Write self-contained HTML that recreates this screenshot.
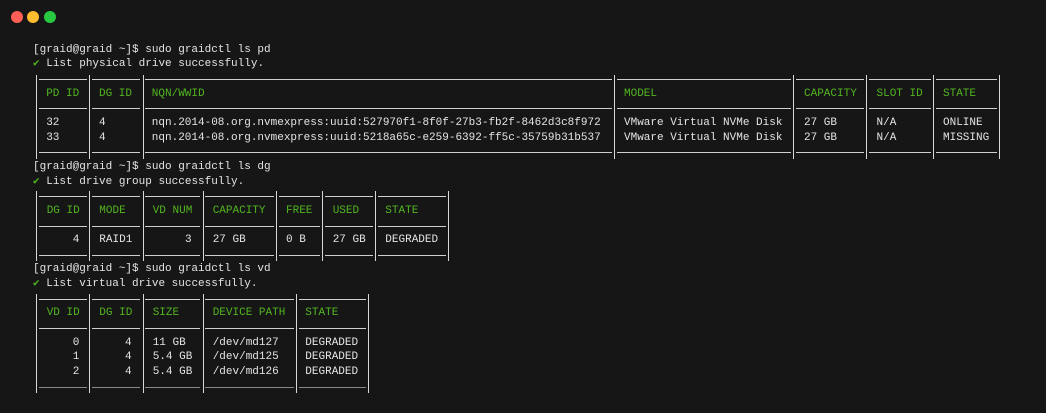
<!DOCTYPE html>
<html><head><meta charset="utf-8"><style>
html,body{margin:0;padding:0;background:#161616;}
#w{position:relative;width:1046px;height:413px;background:#161616;overflow:hidden;font-family:"Liberation Mono","DejaVu Sans Mono",monospace;font-size:11px;color:#e4e4e4;}
.d{position:absolute;top:11px;width:12px;height:12px;border-radius:50%;}
.t{position:absolute;white-space:pre;line-height:14.64px;}
.g{color:#52b520;}
.v{position:absolute;width:1px;background:#d8d8d8;}
.h{position:absolute;height:1px;background:#d0d0d0;}
</style></head><body><div id="w">
<div class="d" style="left:11px;background:#ff5f57"></div>
<div class="d" style="left:27px;background:#febc2e"></div>
<div class="d" style="left:44px;background:#28c840"></div>

<div class="t" style="left:33px;top:42.7px">[graid@graid ~]$ sudo graidctl ls pd</div>
<div class="t" style="left:33px;top:57.3px"><span class="g">✔</span> List physical drive successfully.</div>
<div class="t g" style="left:46.2px;top:86.6px">PD ID</div>
<div class="t g" style="left:99px;top:86.6px">DG ID</div>
<div class="t g" style="left:151.8px;top:86.6px">NQN/WWID</div>
<div class="t g" style="left:624px;top:86.6px">MODEL</div>
<div class="t g" style="left:804px;top:86.6px">CAPACITY</div>
<div class="t g" style="left:876.5px;top:86.6px">SLOT ID</div>
<div class="t g" style="left:943px;top:86.6px">STATE</div>
<div class="t" style="left:46.2px;top:115.9px">32</div>
<div class="t" style="left:99px;top:115.9px">4</div>
<div class="t" style="left:151.8px;top:115.9px">nqn.2014-08.org.nvmexpress:uuid:527970f1-8f0f-27b3-fb2f-8462d3c8f972</div>
<div class="t" style="left:624px;top:115.9px">VMware Virtual NVMe Disk</div>
<div class="t" style="left:804px;top:115.9px">27 GB</div>
<div class="t" style="left:876.5px;top:115.9px">N/A</div>
<div class="t" style="left:943px;top:115.9px">ONLINE</div>
<div class="t" style="left:46.2px;top:130.5px">33</div>
<div class="t" style="left:99px;top:130.5px">4</div>
<div class="t" style="left:151.8px;top:130.5px">nqn.2014-08.org.nvmexpress:uuid:5218a65c-e259-6392-ff5c-35759b31b537</div>
<div class="t" style="left:624px;top:130.5px">VMware Virtual NVMe Disk</div>
<div class="t" style="left:804px;top:130.5px">27 GB</div>
<div class="t" style="left:876.5px;top:130.5px">N/A</div>
<div class="t" style="left:943px;top:130.5px">MISSING</div>

<div class="v" style="left:36px;top:75px;height:84px"></div>
<div class="v" style="left:89px;top:75px;height:84px"></div>
<div class="v" style="left:142.5px;top:75px;height:84px"></div>
<div class="v" style="left:614px;top:75px;height:84px"></div>
<div class="v" style="left:793px;top:75px;height:84px"></div>
<div class="v" style="left:866px;top:75px;height:84px"></div>
<div class="v" style="left:933px;top:75px;height:84px"></div>
<div class="v" style="left:999px;top:75px;height:84px"></div>
<div class="h" style="left:39px;width:48px;top:79px"></div><div class="h" style="left:92px;width:48px;top:79px"></div><div class="h" style="left:145px;width:467px;top:79px"></div><div class="h" style="left:617px;width:174px;top:79px"></div><div class="h" style="left:796px;width:68px;top:79px"></div><div class="h" style="left:869px;width:62px;top:79px"></div><div class="h" style="left:936px;width:61px;top:79px"></div>
<div class="h" style="left:39px;width:48px;top:108px"></div><div class="h" style="left:92px;width:48px;top:108px"></div><div class="h" style="left:145px;width:467px;top:108px"></div><div class="h" style="left:617px;width:174px;top:108px"></div><div class="h" style="left:796px;width:68px;top:108px"></div><div class="h" style="left:869px;width:62px;top:108px"></div><div class="h" style="left:936px;width:61px;top:108px"></div>
<div class="h" style="left:39px;width:48px;top:152px"></div><div class="h" style="left:92px;width:48px;top:152px"></div><div class="h" style="left:145px;width:467px;top:152px"></div><div class="h" style="left:617px;width:174px;top:152px"></div><div class="h" style="left:796px;width:68px;top:152px"></div><div class="h" style="left:869px;width:62px;top:152px"></div><div class="h" style="left:936px;width:61px;top:152px"></div>

<div class="t" style="left:33px;top:159.8px">[graid@graid ~]$ sudo graidctl ls dg</div>
<div class="t" style="left:33px;top:174.5px"><span class="g">✔</span> List drive group successfully.</div>
<div class="t g" style="left:46.7px;top:203.7px">DG ID</div>
<div class="t g" style="left:99.3px;top:203.7px">MODE</div>
<div class="t g" style="left:152.7px;top:203.7px">VD NUM</div>
<div class="t g" style="left:212.7px;top:203.7px">CAPACITY</div>
<div class="t g" style="left:286px;top:203.7px">FREE</div>
<div class="t g" style="left:332.7px;top:203.7px">USED</div>
<div class="t g" style="left:385.3px;top:203.7px">STATE</div>
<div class="t" style="left:72.7px;top:233px">4</div>
<div class="t" style="left:99.3px;top:233px">RAID1</div>
<div class="t" style="left:185px;top:233px">3</div>
<div class="t" style="left:212.7px;top:233px">27 GB</div>
<div class="t" style="left:286px;top:233px">0 B</div>
<div class="t" style="left:332.7px;top:233px">27 GB</div>
<div class="t" style="left:385.3px;top:233px">DEGRADED</div>

<div class="v" style="left:36px;top:191px;height:70px"></div>
<div class="v" style="left:89px;top:191px;height:70px"></div>
<div class="v" style="left:142.5px;top:191px;height:70px"></div>
<div class="v" style="left:202.5px;top:191px;height:70px"></div>
<div class="v" style="left:276px;top:191px;height:70px"></div>
<div class="v" style="left:322px;top:191px;height:70px"></div>
<div class="v" style="left:375px;top:191px;height:70px"></div>
<div class="v" style="left:448px;top:191px;height:70px"></div>
<div class="h" style="left:39px;width:48px;top:196px"></div><div class="h" style="left:92px;width:48px;top:196px"></div><div class="h" style="left:145px;width:55px;top:196px"></div><div class="h" style="left:205px;width:69px;top:196px"></div><div class="h" style="left:279px;width:41px;top:196px"></div><div class="h" style="left:325px;width:48px;top:196px"></div><div class="h" style="left:378px;width:68px;top:196px"></div>
<div class="h" style="left:39px;width:48px;top:226px"></div><div class="h" style="left:92px;width:48px;top:226px"></div><div class="h" style="left:145px;width:55px;top:226px"></div><div class="h" style="left:205px;width:69px;top:226px"></div><div class="h" style="left:279px;width:41px;top:226px"></div><div class="h" style="left:325px;width:48px;top:226px"></div><div class="h" style="left:378px;width:68px;top:226px"></div>
<div class="h" style="left:39px;width:48px;top:255px"></div><div class="h" style="left:92px;width:48px;top:255px"></div><div class="h" style="left:145px;width:55px;top:255px"></div><div class="h" style="left:205px;width:69px;top:255px"></div><div class="h" style="left:279px;width:41px;top:255px"></div><div class="h" style="left:325px;width:48px;top:255px"></div><div class="h" style="left:378px;width:68px;top:255px"></div>

<div class="t" style="left:33px;top:262.3px">[graid@graid ~]$ sudo graidctl ls vd</div>
<div class="t" style="left:33px;top:276.9px"><span class="g">✔</span> List virtual drive successfully.</div>
<div class="t g" style="left:46.7px;top:306.2px">VD ID</div>
<div class="t g" style="left:99.3px;top:306.2px">DG ID</div>
<div class="t g" style="left:152.7px;top:306.2px">SIZE</div>
<div class="t g" style="left:212.7px;top:306.2px">DEVICE PATH</div>
<div class="t g" style="left:305.3px;top:306.2px">STATE</div>
<div class="t" style="left:72.7px;top:335.5px">0</div><div class="t" style="left:125px;top:335.5px">4</div><div class="t" style="left:152.7px;top:335.5px">11 GB</div><div class="t" style="left:212.7px;top:335.5px">/dev/md127</div><div class="t" style="left:305.3px;top:335.5px">DEGRADED</div>
<div class="t" style="left:72.7px;top:350.2px">1</div><div class="t" style="left:125px;top:350.2px">4</div><div class="t" style="left:152.7px;top:350.2px">5.4 GB</div><div class="t" style="left:212.7px;top:350.2px">/dev/md125</div><div class="t" style="left:305.3px;top:350.2px">DEGRADED</div>
<div class="t" style="left:72.7px;top:364.8px">2</div><div class="t" style="left:125px;top:364.8px">4</div><div class="t" style="left:152.7px;top:364.8px">5.4 GB</div><div class="t" style="left:212.7px;top:364.8px">/dev/md126</div><div class="t" style="left:305.3px;top:364.8px">DEGRADED</div>

<div class="v" style="left:36px;top:294px;height:99px"></div>
<div class="v" style="left:89px;top:294px;height:99px"></div>
<div class="v" style="left:142.5px;top:294px;height:99px"></div>
<div class="v" style="left:202.5px;top:294px;height:99px"></div>
<div class="v" style="left:296px;top:294px;height:99px"></div>
<div class="v" style="left:368px;top:294px;height:99px"></div>
<div class="h" style="left:39px;width:48px;top:299px"></div><div class="h" style="left:92px;width:48px;top:299px"></div><div class="h" style="left:145px;width:55px;top:299px"></div><div class="h" style="left:205px;width:89px;top:299px"></div><div class="h" style="left:299px;width:67px;top:299px"></div>
<div class="h" style="left:39px;width:48px;top:328px"></div><div class="h" style="left:92px;width:48px;top:328px"></div><div class="h" style="left:145px;width:55px;top:328px"></div><div class="h" style="left:205px;width:89px;top:328px"></div><div class="h" style="left:299px;width:67px;top:328px"></div>
<div class="h" style="left:39px;width:48px;top:387px;background:#888"></div><div class="h" style="left:92px;width:48px;top:387px;background:#888"></div><div class="h" style="left:145px;width:55px;top:387px;background:#888"></div><div class="h" style="left:205px;width:89px;top:387px;background:#888"></div><div class="h" style="left:299px;width:67px;top:387px;background:#888"></div>
</div></body></html>
